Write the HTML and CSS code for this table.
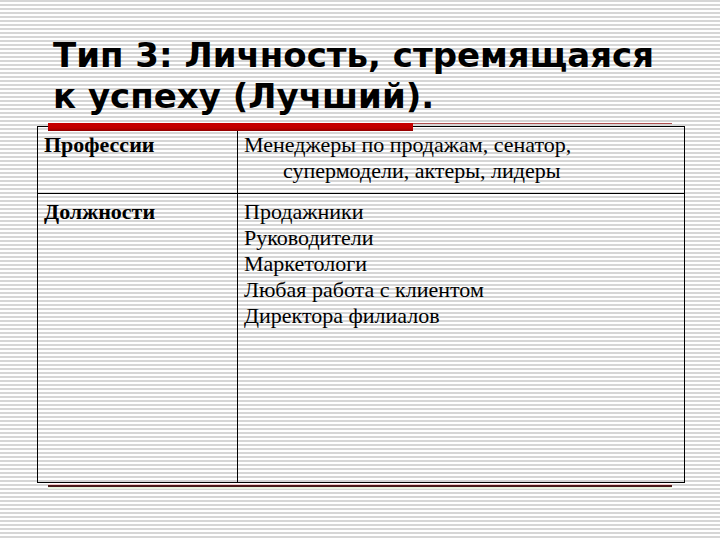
FILE: index.html
```html
<!DOCTYPE html>
<html lang="ru">
<head>
<meta charset="utf-8">
<title>Тип 3</title>
<link rel="stylesheet" href="styles.css">
</head>
<body>
<div class="slide">
  <h1 class="title">Тип 3: Личность, стремящаяся<br>к успеху (Лучший).</h1>
  <div class="rule">
    <div class="rule-bar"></div>
    <div class="rule-thin"></div>
  </div>
  <table class="grid">
    <tr class="row-1">
      <td class="head">Профессии</td>
      <td class="val hang">Менеджеры по продажам, сенатор,<br>супермодели, актеры, лидеры</td>
    </tr>
    <tr class="row-2">
      <td class="head">Должности</td>
      <td class="val">Продажники<br>Руководители<br>Маркетологи<br>Любая работа с клиентом<br>Директора филиалов</td>
    </tr>
  </table>
  <div class="footer-rule"></div>
</div>
</body>
</html>
```

FILE: styles.css
```css
html, body {
  margin: 0;
  padding: 0;
}
.slide {
  width: 720px;
  height: 540px;
  overflow: hidden;
  background: repeating-linear-gradient(to bottom, #d6d6d6 0px, #d6d6d6 2px, #ffffff 2px, #ffffff 4px);
  display: flex;
  flex-direction: column;
}
.title {
  margin: 0;
  padding: 35px 0 0 53px;
  font-family: "DejaVu Sans", Verdana, sans-serif;
  font-weight: bold;
  font-size: 34px;
  line-height: 41px;
  color: #000;
}
.rule {
  position: relative;
  z-index: 2;
  display: flex;
  align-items: flex-start;
  margin-top: 6px;
  margin-bottom: -5px;
  height: 8px;
}
.rule-bar {
  margin-left: 48px;
  width: 365px;
  height: 8px;
  background: linear-gradient(to bottom, #c80000 0, #c00000 5px, #8e0000 8px);
}
.rule-thin {
  width: 259px;
  height: 1px;
  background: #b05050;
}
.grid {
  margin-left: 37px;
  width: 648px;
  border-collapse: collapse;
  border: 1px solid #000;
  font-family: "Liberation Serif", "Times New Roman", serif;
  font-size: 22px;
  line-height: 26px;
  color: #000;
}
.grid td {
  border: 1px solid #000;
  vertical-align: top;
  padding: 5px 6px 0 6px;
}
.grid .head {
  width: 187px;
  font-weight: bold;
}
.grid .hang {
  padding-left: 45px;
  text-indent: -39px;
}
.row-1 {
  height: 67px;
}
.row-2 {
  height: 289px;
}
.footer-rule {
  margin-top: 2px;
  margin-left: 48px;
  width: 624px;
  height: 2px;
  background: #4a1a1a;
  box-shadow: 0 -1px 0 #f2c8c8, 0 2px 0 #e6f4e0;
}
```
